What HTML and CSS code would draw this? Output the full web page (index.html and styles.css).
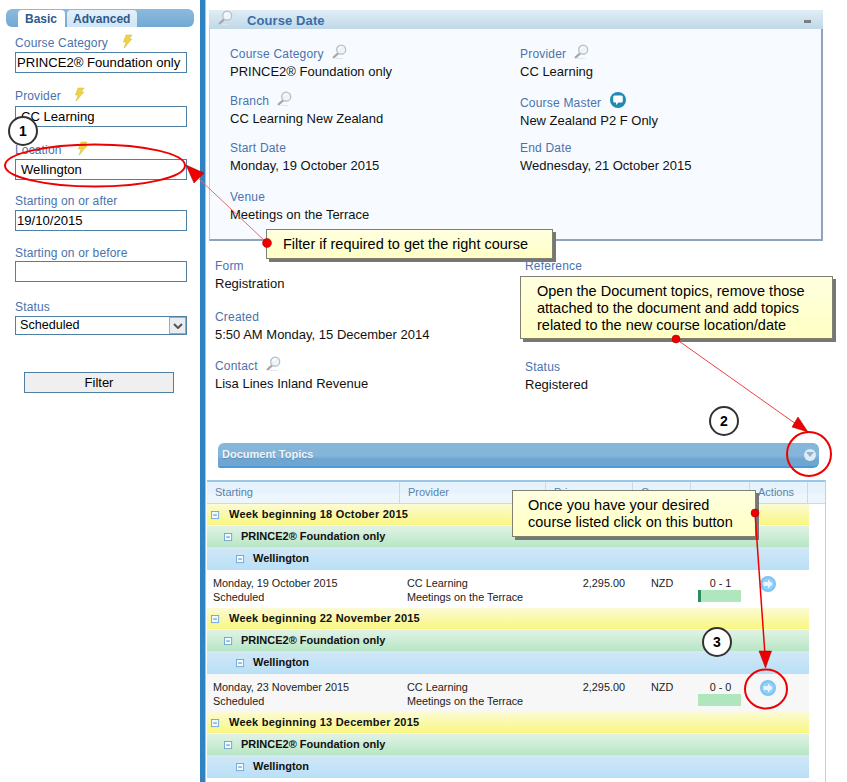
FILE: index.html
```html
<!DOCTYPE html>
<html lang="en">
<head>
<meta charset="utf-8">
<title>Course Date</title>
<link rel="stylesheet" href="styles.css">
</head>
<body>
<svg class="defs" width="0" height="0" aria-hidden="true">
  <defs>
    <symbol id="glass" viewBox="0 0 16 16">
      <path d="M6.5 10 L1.8 14.2" stroke="#a9a9a9" stroke-width="2.4" stroke-linecap="round" fill="none"/>
      <circle cx="9.8" cy="6" r="4.8" fill="#eef5fa" stroke="#b4bfc6" stroke-width="1.4"/>
      <path d="M7.4 5.6 A2.6 2.6 0 0 1 10 3.2" stroke="#fff" stroke-width="1.2" fill="none"/>
      <path d="M4 15.4 H12" stroke="#dfe3e6" stroke-width="1"/>
    </symbol>
    <symbol id="bolt" viewBox="0 0 12 16">
      <path d="M5 13 L3 15 L9 10 Z" fill="#c9c9c0"/>
      <path d="M5 1 H11 L8.2 5 H11 L3 14 L5.2 8 H2.4 Z" fill="#ecd34a" stroke="#d7b92c" stroke-width=".5"/>
    </symbol>
    <symbol id="minus" viewBox="0 0 10 10">
      <rect x=".5" y=".5" width="8" height="8" fill="#f2f8fd" stroke="#6aa5d8"/>
      <path d="M2.5 4.5 H6.5" stroke="#2f7fc4"/>
    </symbol>
    <symbol id="go" viewBox="0 0 16 16">
      <circle cx="8" cy="8" r="8" fill="#7cc4f3"/>
      <circle cx="8" cy="8" r="6" fill="#92d0f8"/>
      <path d="M3.5 6 H8 V3.5 L12.8 8 L8 12.5 V10 H3.5 Z" fill="#e8f5fd"/>
    </symbol>
  </defs>
</svg>

<div class="page">
  <aside class="sidebar">
    <div class="tabbar">
      <span class="tab tab-on">Basic</span>
      <span class="tab">Advanced</span>
    </div>
    <div class="filter f-category">
      <div class="flabel">Course Category<svg class="bolt bolt-a"><use href="#bolt"/></svg></div>
      <div class="input">PRINCE2® Foundation only</div>
    </div>
    <div class="filter f-provider">
      <div class="flabel">Provider<svg class="bolt"><use href="#bolt"/></svg></div>
      <div class="input indent">CC Learning</div>
    </div>
    <div class="filter f-location">
      <div class="flabel">Location<svg class="bolt"><use href="#bolt"/></svg></div>
      <div class="input indent">Wellington</div>
    </div>
    <div class="filter f-after">
      <div class="flabel">Starting on or after</div>
      <div class="input">19/10/2015</div>
    </div>
    <div class="filter f-before">
      <div class="flabel">Starting on or before</div>
      <div class="input"></div>
    </div>
    <div class="filter f-status">
      <div class="flabel">Status</div>
      <div class="select"><span>Scheduled</span><span class="arrow"><svg width="10" height="6" viewBox="0 0 10 6"><path d="M1 1 L5 5 L9 1" fill="none" stroke="#555" stroke-width="2"/></svg></span></div>
    </div>
    <div class="filter-btn">Filter</div>
  </aside>
  <div class="divider"></div>
  <main class="main">
    <section class="panel">
      <header class="panel-head">
        <svg class="head-glass"><use href="#glass"/></svg>
        <span class="panel-title">Course Date</span>
        <span class="collapse"></span>
      </header>
      <div class="panel-body">
        <div class="field"><div class="label">Course Category<svg class="glass"><use href="#glass"/></svg></div><div class="value">PRINCE2® Foundation only</div></div>
        <div class="field"><div class="label">Provider<svg class="glass"><use href="#glass"/></svg></div><div class="value">CC Learning</div></div>
        <div class="field"><div class="label">Branch<svg class="glass"><use href="#glass"/></svg></div><div class="value">CC Learning New Zealand</div></div>
        <div class="field field-low"><div class="label">Course Master<svg class="chat" viewBox="0 0 16 16"><circle cx="8" cy="8" r="8" fill="#1f8ab5"/><path d="M4.5 3.5 H11.5 Q12.8 3.5 12.8 5 V9 Q12.8 10.5 11.5 10.5 H8.5 L6 13 V10.5 H4.5 Q3.2 10.5 3.2 9 V5 Q3.2 3.5 4.5 3.5 Z" fill="#fff"/></svg></div><div class="value">New Zealand P2 F Only</div></div>
        <div class="field"><div class="label">Start Date</div><div class="value">Monday, 19 October 2015</div></div>
        <div class="field"><div class="label">End Date</div><div class="value">Wednesday, 21 October 2015</div></div>
        <div class="field"><div class="label">Venue</div><div class="value">Meetings on the Terrace</div></div>
      </div>
    </section>

    <section class="details">
      <div class="field"><div class="label">Form</div><div class="value">Registration</div></div>
      <div class="field"><div class="label">Reference</div></div>
      <div class="field"><div class="label">Created</div><div class="value">5:50 AM Monday, 15 December 2014</div></div>
      <div class="field"></div>
      <div class="field"><div class="label">Contact<svg class="glass"><use href="#glass"/></svg></div><div class="value">Lisa Lines Inland Revenue</div></div>
      <div class="field field-status"><div class="label">Status</div><div class="value">Registered</div></div>
    </section>

    <div class="doc-bar">
      <span class="doc-title">Document Topics</span>
      <span class="doc-toggle"><svg width="8" height="5" viewBox="0 0 8 5"><path d="M0 0 H8 L4 5 Z" fill="#8fb4d4"/></svg></span>
    </div>

    <section class="topics">
      <div class="thead">
        <div class="th">Starting</div>
        <div class="th">Provider</div>
        <div class="th">Price</div>
        <div class="th">Currency</div>
        <div class="th"></div>
        <div class="th">Actions</div>
        <div class="th"></div>
      </div>
      <div class="tbody">
        <div class="group week"><svg class="minus"><use href="#minus"/></svg>Week beginning 18 October 2015</div>
        <div class="group course"><svg class="minus"><use href="#minus"/></svg>PRINCE2® Foundation only</div>
        <div class="group place"><svg class="minus"><use href="#minus"/></svg>Wellington</div>
        <div class="row">
          <div class="cell">Monday, 19 October 2015<br>Scheduled</div>
          <div class="cell">CC Learning<br>Meetings on the Terrace</div>
          <div class="cell price">2,295.00</div>
          <div class="cell cur">NZD</div>
          <div class="cell seats">0 - 1<div class="bar"><div class="bar-fill"></div></div></div>
          <div class="cell act"><svg class="go"><use href="#go"/></svg></div>
        </div>
        <div class="group week"><svg class="minus"><use href="#minus"/></svg>Week beginning 22 November 2015</div>
        <div class="group course"><svg class="minus"><use href="#minus"/></svg>PRINCE2® Foundation only</div>
        <div class="group place"><svg class="minus"><use href="#minus"/></svg>Wellington</div>
        <div class="row row-alt">
          <div class="cell">Monday, 23 November 2015<br>Scheduled</div>
          <div class="cell">CC Learning<br>Meetings on the Terrace</div>
          <div class="cell price">2,295.00</div>
          <div class="cell cur">NZD</div>
          <div class="cell seats">0 - 0<div class="bar"></div></div>
          <div class="cell act"><svg class="go"><use href="#go"/></svg></div>
        </div>
        <div class="group week"><svg class="minus"><use href="#minus"/></svg>Week beginning 13 December 2015</div>
        <div class="group course"><svg class="minus"><use href="#minus"/></svg>PRINCE2® Foundation only</div>
        <div class="group place"><svg class="minus"><use href="#minus"/></svg>Wellington</div>
      </div>
    </section>
  </main>
</div>

<div class="badge badge-1">1</div>
<div class="badge badge-2">2</div>
<div class="badge badge-3">3</div>

<div class="note note-1">Filter if required to get the right course</div>
<div class="note note-2">Open the Document topics, remove those attached to the document and add topics related to the new course location/date</div>
<div class="note note-3">Once you have your desired course listed click on this button</div>

<svg class="marks" width="847" height="782" viewBox="0 0 847 782" aria-hidden="true">
  <g fill="none" stroke="#ee0000">
    <ellipse cx="95" cy="165.5" rx="90" ry="21" stroke-width="2"/>
    <circle cx="809" cy="454" r="22" stroke-width="2"/>
    <ellipse cx="766" cy="689" rx="21" ry="19.5" stroke-width="2"/>
    <path d="M267 243 L196 176" stroke="#f06a6a"/>
    <path d="M676 339 L796 424" stroke="#f04040"/>
    <path d="M755 513 L765 655" stroke-width="1.5"/>
  </g>
  <g fill="#ee0000" stroke="#a00000" stroke-width=".5">
    <path d="M186 165 L204 173 L194 183 Z"/>
    <path d="M808 432 L792 427 L798 417 Z"/>
    <path d="M765.5 668 L759 651 H771.5 Z"/>
    <circle cx="267" cy="243" r="4.5"/>
    <circle cx="676" cy="339" r="4"/>
    <circle cx="755" cy="513" r="4"/>
  </g>
</svg>
</body>
</html>
```

FILE: styles.css
```css
* { box-sizing: border-box; }
html, body { margin: 0; padding: 0; height: 782px; overflow: hidden; background: #fff; }
body { position: relative; font-family: "Liberation Sans", Arial, sans-serif; color: #111; }
.defs { position: absolute; }
.page { display: flex; height: 782px; }

/* Sidebar */
.sidebar { width: 200px; flex: none; padding: 9px 0 0 6px; }
.tabbar { width: 188px; height: 18px; padding: 1px 0 0 12px; display: flex; gap: 2px; border-radius: 6px; background: linear-gradient(#8dbadd, #71a9d4); }
.tab { padding: 2px 7px 0 6px; height: 17px; border-radius: 4px 4px 0 0; background: linear-gradient(#e3f0fa, #d0e5f5); color: #2c5a8c; font-size: 12px; font-weight: bold; line-height: 15px; }
.tab-on { background: #fff; padding: 2px 8px 0 7px; }
.filter { width: 172px; margin-left: 9px; }
.flabel { display: flex; align-items: center; font-size: 12px; line-height: 16px; color: #4a72ad; height: 16px; white-space: nowrap; letter-spacing: .15px; }
.bolt { width: 12px; height: 16px; margin: -3px 0 0 12px; flex: none; }
.bolt-a { margin-left: 13px; }
.f-location .bolt { margin-left: 14px; }
.input { height: 21px; border: 1px solid #4f7fa3; background: #fff; font-size: 13.1px; line-height: 20px; padding-left: 1px; color: #000; white-space: nowrap; }
.indent { padding-left: 5px; }
.f-category { margin-top: 8px; }
.f-category .flabel { margin-bottom: 1px; }
.f-provider { margin-top: 15px; }
.f-provider .flabel { margin-bottom: 2px; }
.f-location { margin-top: 15px; }
.f-location .flabel { margin-bottom: 1px; }
.f-after { margin-top: 13px; }
.f-after .flabel { margin-bottom: 1px; }
.f-before { margin-top: 14px; }
.f-status { margin-top: 17px; }
.f-status .flabel { margin-bottom: 1px; }
.select { height: 19px; border: 1px solid #4f7fa3; display: flex; justify-content: space-between; font-size: 12.6px; line-height: 16px; padding-left: 4px; color: #000; }
.arrow { width: 17px; height: 17px; background: #e9edef; border: 1px solid #a8a8a8; display: flex; align-items: center; justify-content: center; }
.filter-btn { width: 150px; height: 21px; margin: 37px 0 0 18px; border: 1px solid #4f7fa3; background: #efefef; font-size: 13px; line-height: 19px; text-align: center; color: #000; }

.divider { width: 6px; flex: none; background: #2f83c0; border-right: 1px solid #b8bcd4; }

/* Main */
.main { flex: 1; min-width: 0; }
.label { display: flex; align-items: center; font-size: 12px; line-height: 18px; height: 17px; color: #4a72ad; white-space: nowrap; letter-spacing: .2px; }
.value { margin-top: 1px; font-size: 13px; line-height: 18px; color: #111; white-space: nowrap; }
.glass { width: 15px; height: 15px; margin: -4px 0 0 8px; flex: none; }
.chat { width: 16px; height: 16px; margin: -6px 0 0 9px; flex: none; }

.panel { width: 614px; margin: 10px 0 0 3px; }
.panel-head { height: 19px; padding-top: 1px; display: flex; align-items: center; background: linear-gradient(#e0edf5, #bfd8e8); }
.head-glass { width: 15px; height: 15px; margin: -5px 0 0 9px; flex: none; }
.panel-title { margin-left: 14px; font-size: 13px; font-weight: bold; color: #3a6ea8; flex: 1; letter-spacing: .1px; }
.collapse { width: 7px; height: 3px; margin: 3px 12px 0 0; background: #7d7d86; }
.panel-body { height: 212px; padding: 16px 0 0 20px; display: grid; grid-template-columns: 290px 1fr; grid-template-rows: 47px 47px 49px auto; background: #f7fbff; border-left: 1px solid #b8cfe8; border-right: 2px solid #8fa3bd; border-bottom: 2px solid #8fa3bd; }
.field-low .label { margin-top: 2px; }

.details { margin: 16px 0 0 9px; display: grid; grid-template-columns: 310px 1fr; grid-template-rows: 51px 49px auto; height: 186px; }
.field-status { margin-top: 1px; }

.doc-bar { width: 601px; height: 25px; margin-left: 12px; display: flex; align-items: center; justify-content: space-between; border-radius: 6px 6px 6px 2px; background: linear-gradient(#86b5da 0, #86b5da 55%, #6ea6d1 70%, #6ea6d1 100%); border-bottom: 2px solid #4d9ad8; }
.doc-title { margin: 0 0 1px 4px; font-size: 11px; font-weight: bold; color: #eef6fc; text-shadow: 0 1px 1px #5e8db5; }
.doc-toggle { width: 12px; height: 12px; margin-right: 3px; border-radius: 50%; background: #dfeaf3; display: flex; align-items: center; justify-content: center; }

.topics { margin: 12px 0 0 1px; width: 619px; height: 302px; border-right: 1px solid #b9d2e4; }
.thead { height: 24px; display: grid; grid-template-columns: 193px 146px 87px 58px 59px 58px 17px; border-top: 2px solid #9cc6e6; border-bottom: 1px solid #c8dbe9; background: linear-gradient(#e6f2fc 0, #e6f2fc 50%, #edf6fd 60%, #edf6fd 100%); }
.th { padding-left: 8px; font-size: 11px; line-height: 20px; color: #5884ab; border-right: 1px solid #c8dbe9; }
.th:last-child { border-right: 0; }
.tbody { width: 602px; }
.group { display: flex; align-items: center; padding-bottom: 2px; font-size: 11px; font-weight: bold; color: #111; white-space: nowrap; }
.minus { width: 9px; height: 9px; margin-right: 9px; margin-top: 4px; flex: none; }
.week { height: 22px; padding-left: 4px; letter-spacing: .23px; background: linear-gradient(#fcfbd4, #f9f780); border-bottom: 1px solid #fdfde0; }
.course { height: 21px; padding-left: 17px; background: linear-gradient(#e2f3e5, #b7e6c5); }
.course .minus { margin-right: 8px; }
.place { height: 23px; padding-left: 29px; background: linear-gradient(#d2e8f6, #b9dff6); }
.place .minus { margin-right: 8px; }
.row { height: 38px; display: grid; grid-template-columns: 193px 146px 87px 58px 59px 59px; font-size: 10.85px; line-height: 14px; color: #222; padding-top: 6px; background: #fff; white-space: nowrap; }
.row-alt { background: #f7f7f7; }
.cell { padding-left: 6px; }
.cell:nth-child(2) { padding-left: 7px; }
.price { padding: 0 8px 0 0; text-align: right; }
.cur { padding-left: 18px; }
.seats { padding: 0; text-align: center; }
.bar { width: 43px; height: 12px; margin: 0 0 0 7px; background: #b0e6bd; }
.bar-fill { width: 3px; height: 12px; background: #2e8b5a; }
.act { padding: 0 0 0 10px; }
.go { display: block; width: 16px; height: 16px; }

/* Overlays */
.marks { position: absolute; left: 0; top: 0; pointer-events: none; }
.badge { position: absolute; width: 30px; height: 30px; border: 2px solid #333; border-radius: 50%; background: #fff; color: #000; font-size: 14px; font-weight: bold; line-height: 26px; text-align: center; }
.badge-1 { left: 8px; top: 116px; }
.badge-2 { left: 709px; top: 406px; }
.badge-3 { left: 702px; top: 627px; }
.note { position: absolute; border: 1px solid #7f7f72; background: linear-gradient(#ffffe0, #ffffc4); box-shadow: 3px 3px 0 #777; color: #000; font-size: 14.5px; line-height: 17px; }
.note-1 { left: 266px; top: 229px; width: 287px; height: 30px; padding: 6px 0 0 16px; white-space: nowrap; }
.note-2 { left: 520px; top: 276px; width: 313px; height: 63px; padding: 6px 10px 0 16px; }
.note-3 { left: 512px; top: 490px; width: 244px; height: 47px; padding: 6px 10px 0 15px; }
```
